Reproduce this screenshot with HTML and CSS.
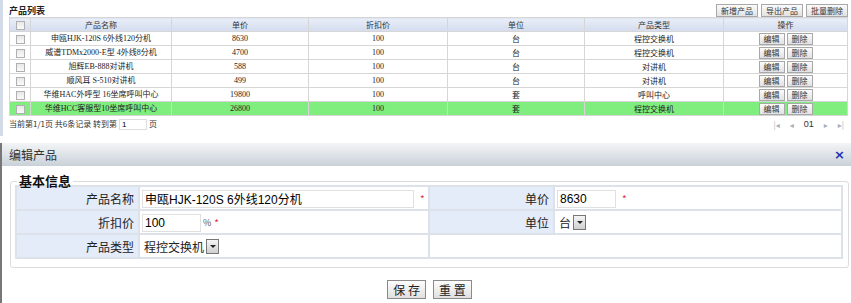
FILE: index.html
```html
<!DOCTYPE html>
<html lang="zh-CN">
<head>
    <meta charset="UTF-8">
    <title>产品管理</title>
    <link rel="stylesheet" href="styles.css">
</head>
<body>
    <div class="list-panel">
        <div class="list-head">
            <span class="list-title">产品列表</span>
            <div class="tool-btns">
                <button class="btn-sm">新增产品</button>
                <button class="btn-sm">导出产品</button>
                <button class="btn-sm">批量删除</button>
            </div>
        </div>
        <table class="grid">
            <colgroup>
                <col style="width:21px">
                <col style="width:141px">
                <col style="width:137px">
                <col style="width:139px">
                <col style="width:137px">
                <col style="width:139px">
                <col>
            </colgroup>
            <thead>
                <tr>
                    <th><span class="chk"></span></th>
                    <th>产品名称</th>
                    <th>单价</th>
                    <th>折扣价</th>
                    <th>单位</th>
                    <th>产品类型</th>
                    <th>操作</th>
                </tr>
            </thead>
            <tbody>
                <tr>
                    <td><span class="chk"></span></td>
                    <td class="serif">申瓯HJK-120S 6外线120分机</td>
                    <td class="serif">8630</td>
                    <td class="serif">100</td>
                    <td>台</td>
                    <td>程控交换机</td>
                    <td><button class="btn-op">编辑</button><button class="btn-op">删除</button></td>
                </tr>
                <tr>
                    <td><span class="chk"></span></td>
                    <td class="serif">威谱TDMx2000-E型 4外线8分机</td>
                    <td class="serif">4700</td>
                    <td class="serif">100</td>
                    <td>台</td>
                    <td>程控交换机</td>
                    <td><button class="btn-op">编辑</button><button class="btn-op">删除</button></td>
                </tr>
                <tr>
                    <td><span class="chk"></span></td>
                    <td class="serif">旭辉EB-888对讲机</td>
                    <td class="serif">588</td>
                    <td class="serif">100</td>
                    <td>台</td>
                    <td>对讲机</td>
                    <td><button class="btn-op">编辑</button><button class="btn-op">删除</button></td>
                </tr>
                <tr>
                    <td><span class="chk"></span></td>
                    <td class="serif">顺风耳 S-510对讲机</td>
                    <td class="serif">499</td>
                    <td class="serif">100</td>
                    <td>台</td>
                    <td>对讲机</td>
                    <td><button class="btn-op">编辑</button><button class="btn-op">删除</button></td>
                </tr>
                <tr>
                    <td><span class="chk"></span></td>
                    <td class="serif">华维HAC外呼型 16坐席呼叫中心</td>
                    <td class="serif">19800</td>
                    <td class="serif">100</td>
                    <td>套</td>
                    <td>呼叫中心</td>
                    <td><button class="btn-op">编辑</button><button class="btn-op">删除</button></td>
                </tr>
                <tr class="selected">
                    <td><span class="chk"></span></td>
                    <td class="serif">华维HCC客服型10坐席呼叫中心</td>
                    <td class="serif">26800</td>
                    <td class="serif">100</td>
                    <td>套</td>
                    <td>程控交换机</td>
                    <td><button class="btn-op">编辑</button><button class="btn-op">删除</button></td>
                </tr>
            </tbody>
        </table>
        <div class="pager">
            <span class="pager-info">当前第1/1页 共6条记录 转到第<input class="page-input" type="text" value="1">页</span>
            <span class="pager-nav">
                <span class="nav-ico">|◂</span>
                <span class="nav-ico">◂</span>
                <span class="page-no">01</span>
                <span class="nav-ico">▸</span>
                <span class="nav-ico">▸|</span>
            </span>
        </div>
    </div>

    <div class="dialog">
        <div class="dialog-head">
            <span>编辑产品</span>
            <span class="close">×</span>
        </div>
        <div class="dialog-body">
            <fieldset class="box">
                <legend>基本信息</legend>
                <table class="form">
                    <colgroup>
                        <col style="width:123px">
                        <col style="width:290px">
                        <col style="width:125px">
                        <col>
                    </colgroup>
                    <tr>
                        <td class="lbl">产品名称</td>
                        <td><input class="txt txt-long" type="text" value="申瓯HJK-120S 6外线120分机"><span class="req">*</span></td>
                        <td class="lbl">单价</td>
                        <td><input class="txt txt-short" type="text" value="8630"><span class="req">*</span></td>
                    </tr>
                    <tr>
                        <td class="lbl">折扣价</td>
                        <td><input class="txt txt-short" type="text" value="100"><span class="pct">%</span><span class="req">*</span></td>
                        <td class="lbl">单位</td>
                        <td><span class="sel">台<span class="sel-arrow"></span></span></td>
                    </tr>
                    <tr>
                        <td class="lbl">产品类型</td>
                        <td><span class="sel">程控交换机<span class="sel-arrow"></span></span></td>
                        <td class="blank" colspan="2"></td>
                    </tr>
                </table>
            </fieldset>
            <div class="actions">
                <button class="btn">保 存</button>
                <button class="btn">重 置</button>
            </div>
        </div>
    </div>
</body>
</html>
```

FILE: styles.css
```css
body {
    margin: 0;
    font-family: "Noto Sans CJK SC", "DejaVu Sans", sans-serif;
    color: #222;
    background: #fff;
}

.list-panel {
    padding: 3px 3px 0 6px;
    border-left: 3px solid #d4dbe8;
    height: 136px;
    box-sizing: border-box;
}

.list-head {
    display: flex;
    justify-content: space-between;
    align-items: flex-end;
    height: 14px;
}

.list-title {
    font-size: 9px;
    font-weight: bold;
    line-height: 12px;
}

.tool-btns {
    display: flex;
    gap: 3px;
}

.btn-sm, .btn-op {
    font-family: "Noto Sans CJK SC", sans-serif;
    font-size: 8px;
    line-height: 10px;
    padding: 0 3px;
    height: 12px;
    border: 1px solid #a8a8a8;
    background: linear-gradient(#fbfbfb, #e2e2e2);
    color: #333;
    cursor: pointer;
}

.btn-sm {
    height: 13px;
    padding: 0 4px;
}

.grid {
    width: 100%;
    border-collapse: collapse;
    table-layout: fixed;
    font-size: 8px;
}

.grid th, .grid td {
    border: 1px solid #d6d6d6;
    height: 13px;
    padding: 0;
    text-align: center;
    line-height: 11px;
    white-space: nowrap;
    overflow: hidden;
}

.grid th {
    font-weight: normal;
    background: linear-gradient(#e9eef8, #d3dcee);
    color: #333;
}

.grid .serif {
    font-family: "Liberation Serif", "Noto Sans CJK SC", serif;
    font-size: 8px;
}

.grid tr.selected td {
    background: #7fee7f;
}

.chk {
    display: inline-block;
    width: 7px;
    height: 7px;
    border: 1px solid #b0b0b0;
    background: linear-gradient(#e8e8e8, #fafafa);
    vertical-align: middle;
}

.btn-op {
    margin: 0 1px;
    padding: 0 4px;
    height: 12px;
    vertical-align: middle;
}

.pager {
    display: flex;
    justify-content: space-between;
    align-items: center;
    height: 16px;
    font-size: 8px;
    color: #333;
}

.page-input {
    width: 22px;
    height: 9px;
    border: 1px solid #ddd;
    font-size: 8px;
    padding: 0 2px;
    margin: 0 2px;
    font-family: "Liberation Sans", sans-serif;
}

.pager-nav {
    display: flex;
    gap: 10px;
    align-items: center;
    padding-right: 4px;
}

.nav-ico {
    color: #a8b0ba;
    font-size: 8px;
}

.page-no {
    font-family: "Liberation Sans", sans-serif;
    font-size: 9px;
    color: #333;
}

.dialog {
    margin-top: 7px;
    border-left: 2px solid #777;
    height: 160px;
}

.dialog-head {
    display: flex;
    justify-content: space-between;
    align-items: center;
    height: 23px;
    padding: 0 6px 0 7px;
    background: linear-gradient(#f3f5f7, #c9d1d8);
    font-size: 12px;
    color: #333;
}

.close {
    color: #1a30b8;
    font-weight: bold;
    font-size: 13px;
    font-family: "DejaVu Sans", sans-serif;
}

.dialog-body {
    padding: 8px 2px 0 8px;
}

.box {
    margin: 0;
    padding: 0 5px 8px 4px;
    border: 1px solid #dcdcdc;
    border-radius: 3px;
}

.box legend {
    font-size: 13px;
    font-weight: bold;
    padding: 0 2px;
    margin-left: 2px;
    line-height: 14px;
    color: #111;
}

.form {
    width: 100%;
    border-collapse: collapse;
    table-layout: fixed;
    font-size: 12px;
    margin-top: -3px;
}

.form td {
    border: 2px solid #dde2ea;
    height: 20px;
    padding: 1px 2px;
}

.form td.lbl {
    background: #e4ebf9;
    text-align: right;
    padding-right: 4px;
}

.txt {
    font-family: "Liberation Sans", "Noto Sans CJK SC", sans-serif;
    font-size: 12px;
    height: 18px;
    box-sizing: border-box;
    border: 1px solid #e0e0e0;
    padding: 0 2px;
    vertical-align: middle;
}

.txt-long {
    width: 272px;
}

.txt-short {
    width: 59px;
}

.req {
    color: #e0303a;
    font-size: 10px;
    margin-left: 6px;
    vertical-align: middle;
}

.pct {
    font-size: 9px;
    color: #555;
    margin-left: 2px;
}

.pct + .req {
    margin-left: 3px;
}

.sel {
    display: inline-flex;
    align-items: center;
    gap: 2px;
    font-size: 12px;
    padding: 0 1px 0 2px;
    height: 18px;
    vertical-align: middle;
}

.sel-arrow {
    display: inline-block;
    width: 11px;
    height: 13px;
    border: 1px solid #777;
    background: linear-gradient(#f5f5f5, #cfcfcf);
    position: relative;
}

.sel-arrow::after {
    content: "";
    position: absolute;
    left: 3px;
    top: 5px;
    border-left: 3px solid transparent;
    border-right: 3px solid transparent;
    border-top: 3px solid #222;
}

.actions {
    display: flex;
    justify-content: center;
    gap: 7px;
    padding-top: 12px;
}

.btn {
    font-family: "Noto Sans CJK SC", sans-serif;
    font-size: 12px;
    height: 19px;
    line-height: 15px;
    padding: 0 5px;
    border: 1px solid #8a8a8a;
    background: linear-gradient(#fdfdfd, #e0e0e0);
    color: #222;
    cursor: pointer;
}
```
